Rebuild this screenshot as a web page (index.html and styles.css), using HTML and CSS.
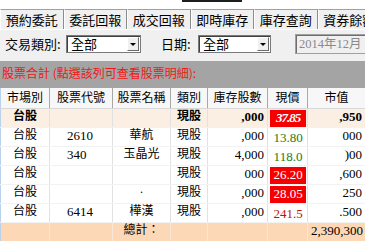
FILE: index.html
```html
<!DOCTYPE html>
<html>
<head>
  <meta charset="utf-8">
  <link rel="stylesheet" href="styles.css">
</head>
<body>
  <div class="top"><span class="top-mark"></span></div>
  <div class="tabs">
    <div class="tab">預約委託</div>
    <div class="tab">委託回報</div>
    <div class="tab">成交回報</div>
    <div class="tab">即時庫存</div>
    <div class="tab">庫存查詢</div>
    <div class="tab">資券餘額</div>
  </div>
  <div class="filters">
    <span class="label label-type">交易類別:</span>
    <div class="select select-type"><span>全部</span><span class="drop"></span></div>
    <span class="label label-date">日期:</span>
    <div class="select select-date"><span>全部</span><span class="drop"></span></div>
    <div class="month">2014年12月</div>
  </div>
  <div class="band">股票合計 (點選該列可查看股票明細):</div>
  <table class="grid">
    <colgroup>
      <col style="width:49px"><col style="width:63px"><col style="width:58px"><col style="width:37px"><col style="width:60px"><col style="width:40px"><col style="width:58px">
    </colgroup>
    <thead>
      <tr><th>市場別</th><th>股票代號</th><th>股票名稱</th><th>類別</th><th>庫存股數</th><th>現價</th><th>市值</th></tr>
    </thead>
    <tbody>
      <tr class="row-sum">
        <td class="c-mkt">台股</td><td class="c-code"></td><td class="c-name"></td><td class="c-kind">現股</td>
        <td class="c-num">,000</td><td class="c-px"><span class="px-hi px-sum">37.85</span></td><td class="c-num">,950</td>
      </tr>
      <tr>
        <td class="c-mkt">台股</td><td class="c-code">2610</td><td class="c-name">華航</td><td class="c-kind">現股</td>
        <td class="c-num">,000</td><td class="c-px"><span class="px-up">13.80</span></td><td class="c-num">000</td>
      </tr>
      <tr>
        <td class="c-mkt">台股</td><td class="c-code">340</td><td class="c-name">玉晶光</td><td class="c-kind">現股</td>
        <td class="c-num">4,000</td><td class="c-px"><span class="px-up">118.0</span></td><td class="c-num">)00</td>
      </tr>
      <tr>
        <td class="c-mkt">台股</td><td class="c-code"></td><td class="c-name"></td><td class="c-kind">現股</td>
        <td class="c-num">000</td><td class="c-px"><span class="px-hi">26.20</span></td><td class="c-num">,600</td>
      </tr>
      <tr>
        <td class="c-mkt">台股</td><td class="c-code"></td><td class="c-name">·</td><td class="c-kind">現股</td>
        <td class="c-num">,000</td><td class="c-px"><span class="px-hi">28.05</span></td><td class="c-num">250</td>
      </tr>
      <tr>
        <td class="c-mkt">台股</td><td class="c-code">6414</td><td class="c-name">樺漢</td><td class="c-kind">現股</td>
        <td class="c-num">,000</td><td class="c-px"><span class="px-down">241.5</span></td><td class="c-num">.500</td>
      </tr>
      <tr class="row-total">
        <td></td><td></td><td class="c-name">總計：</td><td></td><td></td><td></td><td class="c-num">2,390,300</td>
      </tr>
    </tbody>
  </table>
</body>
</html>
```

FILE: styles.css
```css
body {
  margin: 0;
  width: 365px;
  height: 241px;
  overflow: hidden;
  background: #f0f0f0;
  font-family: "Noto Sans CJK TC", sans-serif;
  font-size: 13px;
  color: #000;
}

.top {
  height: 9px;
  background: #fff;
}

.top-mark {
  display: block;
  margin-left: 182px;
  width: 59px;
  height: 2px;
  background: #1e1e1e;
  border-right: 1px solid #1e1e1e;
}

/* tab strip */
.tabs {
  display: flex;
  height: 20px;
  overflow: hidden;
  border-bottom: 1px solid #fff;
}

.tab {
  flex: 0 0 63.5px;
  box-sizing: border-box;
  border-top: 1px solid #a0a0a0;
  border-left: 1px solid #fff;
  border-right: 1px solid #8c8c8c;
  text-align: center;
  line-height: 19px;
  font-size: 13px;
  white-space: nowrap;
  overflow: hidden;
}

/* filter row */
.filters {
  display: flex;
  align-items: center;
  height: 25px;
  padding-left: 5px;
  padding-top: 1px;
}

.label {
  font-size: 13px;
  line-height: 17px;
}

.label-type {
  width: 61px;
}

.label-date {
  width: 37px;
  margin-left: 20px;
}

.select {
  display: flex;
  align-items: center;
  box-sizing: border-box;
  height: 18px;
  background: #fff;
  border: 1px solid #7a7a7a;
  box-shadow: inset 1px 1px 0 #404040;
  padding: 0 1px 0 4px;
}

.select span:first-child {
  flex: 1;
  line-height: 16px;
}

.select-type {
  width: 75px;
}

.select-date {
  width: 73px;
}

.drop {
  position: relative;
  width: 12px;
  height: 14px;
  box-sizing: border-box;
  background: #f0f0f0;
  border: 1px solid #fff;
  border-right-color: #6a6a6a;
  border-bottom-color: #6a6a6a;
}

.drop::after {
  content: '';
  position: absolute;
  left: 2px;
  top: 5px;
  border: 3px solid transparent;
  border-top: 3px solid #000;
  border-bottom: 0;
}

.month {
  flex: 1;
  min-width: 0;
  margin-left: 24px;
  height: 20px;
  box-sizing: border-box;
  border: 1px solid #a0a0a0;
  border-right: none;
  box-shadow: inset 1px 1px 0 #6e6e6e;
  padding-left: 3px;
  font-family: "Liberation Serif", "Noto Sans CJK TC", serif;
  font-size: 12.5px;
  line-height: 18px;
  color: #8a8a8a;
  white-space: nowrap;
  overflow: hidden;
}

/* summary band */
.band {
  margin-top: 5px;
  height: 27px;
  box-sizing: border-box;
  padding: 5px 2px 0;
  background: #a4a4a4;
  color: #f01818;
  font-size: 12px;
  line-height: 14px;
  white-space: nowrap;
}

/* grid */
.grid {
  table-layout: fixed;
  border-collapse: collapse;
  width: 365px;
  border-left: 1px solid #b9d1ea;
  font-family: "Liberation Serif", "Noto Sans CJK TC", serif;
  font-size: 13px;
}

.grid thead tr {
  height: 20px;
}

.grid tbody tr {
  height: 19px;
}

.grid th {
  padding: 0 0 2px;
  background: #f7f7f7;
  border-right: 1px solid #a8a8a8;
  border-bottom: 1px solid #d8d8d8;
  font-family: "Noto Sans CJK TC", sans-serif;
  font-weight: normal;
  font-size: 12px;
  line-height: 15px;
  text-align: center;
  white-space: nowrap;
  overflow: hidden;
}

.grid td {
  padding: 0 3px 2px;
  background: #fff;
  border-right: 1px solid #e2e2e2;
  border-bottom: 1px solid #f2f2f2;
  line-height: 15px;
  white-space: nowrap;
  overflow: hidden;
}

.grid td.c-mkt,
.grid td.c-kind {
  font-size: 12px;
  text-align: center;
}

.grid td.c-code {
  padding-left: 17px;
}

.grid td.c-name {
  font-size: 12px;
  text-align: center;
}

.grid td.c-num {
  text-align: right;
}

.grid td.c-px {
  padding: 1px 1px 0 2px;
  text-align: center;
}

.px-hi {
  display: block;
  height: 17px;
  line-height: 16px;
  background: #f50000;
  color: #fff;
}

.px-sum {
  font-style: italic;
  font-weight: bold;
  letter-spacing: -1px;
}

.px-up {
  color: #177d17;
}

.px-down {
  color: #c01010;
}

.row-sum td {
  background: #fbeee3;
  font-weight: bold;
}

.row-total td {
  background: #fcd8b6;
  border-right-color: #f8e6d6;
  border-bottom: none;
}
```
